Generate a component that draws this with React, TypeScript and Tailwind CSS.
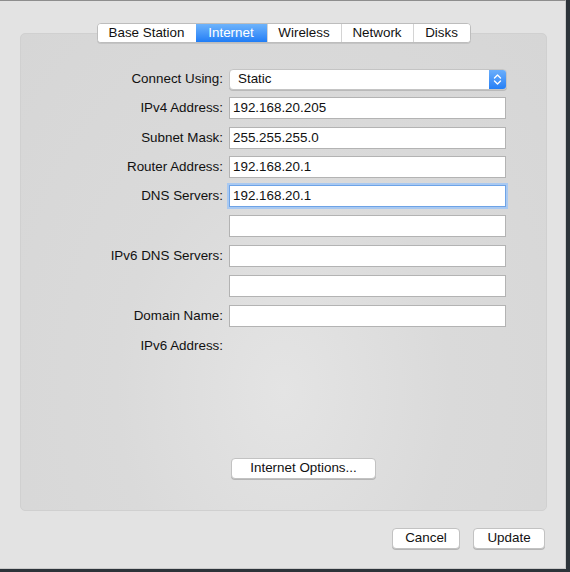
import React from "react";

const tabs = ["Base Station", "Internet", "Wireless", "Network", "Disks"];
const tabWidths = [99, 71, 74, 72, 57];

type Row = { label: string; value?: string; focused?: boolean; kind?: "text" | "none"; mt: number };

const rows: Row[] = [
  { label: "IPv4 Address:", value: "192.168.20.205", mt: 7 },
  { label: "Subnet Mask:", value: "255.255.255.0", mt: 8 },
  { label: "Router Address:", value: "192.168.20.1", mt: 7 },
  { label: "DNS Servers:", value: "192.168.20.1", focused: true, mt: 7 },
  { label: "", value: "", mt: 8 },
  { label: "IPv6 DNS Servers:", value: "", mt: 8 },
  { label: "", value: "", mt: 8 },
  { label: "Domain Name:", value: "", mt: 8 },
  { label: "IPv6 Address:", kind: "none", mt: 8 },
];

function Field({ value, focused }: { value: string; focused?: boolean }) {
  return (
    <div
      className={
        "w-[277px] h-[22px] bg-white flex items-center pl-[3px] text-[13.4px] text-[#111]" +
        (focused
          ? " border border-[#6ea3e6] shadow-[0_0_0_2px_#a9c9f1]"
          : " border border-[#b3b3b3]")
      }
    >
      {value}
    </div>
  );
}

function MacButton({ children, className }: { children: React.ReactNode; className: string }) {
  return (
    <div
      className={
        "h-[21px] bg-white rounded-[4px] border border-[#c2c2c2] shadow-[0_1px_0_#b5b5b5] flex items-center justify-center text-[13.4px] text-[#111] " +
        className
      }
    >
      {children}
    </div>
  );
}

export default function App() {
  return (
    <div
      className="w-[570px] h-[572px] bg-[#2c3339] overflow-hidden"
      style={{ fontFamily: '"Liberation Sans", Arial, sans-serif' }}
    >
      <div className="w-[566px] h-[569px] bg-[#e3e3e3] border-t border-t-[#8e8e8e] border-r border-r-[#c9c9c9] border-b border-b-[#c9c9c9] flex flex-col">
        <div className="pt-[22px] flex flex-col">
          {/* Tabs */}
          <div className="relative z-10 flex justify-center">
            <div className="flex h-[20px] ml-[2px] rounded-[4px] border border-[#bdbdbd] shadow-[0_1px_0_#c4c4c4] bg-white overflow-hidden">
              {tabs.map((t, i) => (
                <div
                  key={t}
                  style={{ width: tabWidths[i] - (i === 0 ? 1 : 0) }}
                  className={
                    "flex items-center justify-center text-[13.4px] " +
                    (i === 1
                      ? "bg-gradient-to-b from-[#6db3fb] to-[#1f7df6] text-white"
                      : "text-[#111] bg-white") +
                    (i > 1 ? " border-l border-l-[#d4d4d4]" : "")
                  }
                >
                  {t}
                </div>
              ))}
            </div>
          </div>
          {/* Group box */}
          <div className="-mt-[10px] ml-[20px] w-[527px] h-[478px] rounded-[5px] border border-[#d0d0d0] bg-[radial-gradient(ellipse_at_50%_75%,#e4e4e4_0%,#dadada_45%,#d6d6d6_100%)] flex flex-col">
            <div className="pt-[35px] flex flex-col">
              {/* Connect Using row */}
              <div className="flex items-center h-[21px]">
                <div className="w-[202px] text-right text-[13.4px] text-[#111]">Connect Using:</div>
                <div className="ml-[6px] w-[278px] h-[21px] rounded-[4px] bg-white border border-[#c4c4c4] shadow-[0_1px_0_#b9b9b9] flex items-center overflow-hidden">
                  <div className="flex-1 pl-[8px] text-[13.4px] text-[#111]">Static</div>
                  <div className="w-[17px] h-full bg-gradient-to-b from-[#6aaefb] to-[#237ff6] flex items-center justify-center">
                    <svg width="9" height="13" viewBox="0 0 9 13" fill="none" stroke="white" strokeWidth="1.4" strokeLinecap="round" strokeLinejoin="round">
                      <path d="M1.5 5 L4.5 2 L7.5 5" />
                      <path d="M1.5 8 L4.5 11 L7.5 8" />
                    </svg>
                  </div>
                </div>
              </div>
              <div className="flex flex-col">
                {rows.map((r, i) => (
                  <div key={i} className="flex items-center h-[22px]" style={{ marginTop: r.mt }}>
                    <div className="w-[202px] text-right text-[13.4px] text-[#111]">{r.label}</div>
                    <div className="ml-[6px]">
                      {r.kind === "none" ? null : <Field value={r.value ?? ""} focused={r.focused} />}
                    </div>
                  </div>
                ))}
              </div>
            </div>
            <div className="mt-[101px] ml-[210px]">
              <MacButton className="w-[145px]">Internet Options...</MacButton>
            </div>
          </div>
          {/* Bottom buttons */}
          <div className="mt-[17px] flex gap-[13px] ml-[392px]">
            <MacButton className="w-[68px]">Cancel</MacButton>
            <MacButton className="w-[72px]">Update</MacButton>
          </div>
        </div>
      </div>
    </div>
  );
}
